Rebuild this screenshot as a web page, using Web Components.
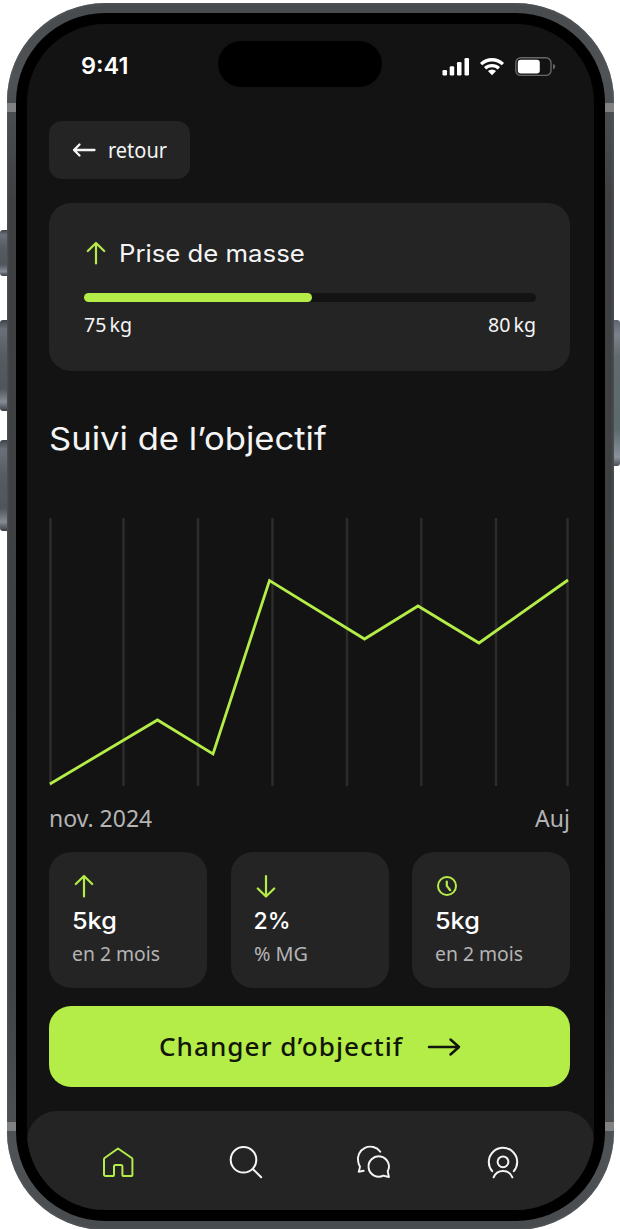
<!DOCTYPE html>
<html lang="fr">
<head>
<meta charset="utf-8">
<title>Suivi de l’objectif</title>
<style>
  html, body {
    margin: 0;
    height: 100%;
    overflow: hidden;
    background: #fff;
  }
  body {
    --color-bg: #131313;
    --color-surface: #242424;
    --color-text: #f5f5f5;
    --color-muted: #b4b4b4;
    --color-accent: #b4ed47;
    --font: "Noto Sans", "Open Sans", sans-serif;
    --font-title: Inter, "Liberation Sans", sans-serif;
    color: var(--color-text);
    font-family: var(--font);
  }
</style>
</head>
<body>
<phone-frame>
  <status-bar slot="status" time="9:41"></status-bar>
  <goal-page></goal-page>
  <tab-bar slot="nav"></tab-bar>
</phone-frame>

<script>
const ICONS = {
  back: [24, 16, '<path d="M22.500 8H2M7.500 2.500 2 8l5.500 5.500" stroke-width="2.300"/>'],
  up: [24, 24, '<path d="M12 22.500V2M3.800 10 12 2l8.200 8" stroke-width="2.200"/>'],
  down: [24, 24, '<path d="M12 2v20.500M3.800 14.500l8.200 8 8.200-8" stroke-width="2.200"/>'],
  clock: [24, 24, '<circle cx="12" cy="12" r="9" stroke-width="2"/><path d="M11.800 7.500v4.400l3.400 4.300" stroke-width="2.200"/>'],
  next: [34, 20, '<path d="M2 10h29.500M23.500 2.500l8.500 7.500-8.500 7.500" stroke-width="2.500"/>'],
  home: [36, 36, '<path d="M18 4.500 31.800 14q.6.500.6 1.300V30.400q0 1.600-1.600 1.600H24q-1.600 0-1.600-1.600v-7.800q0-1.600-1.600-1.600h-5.200q-1.600 0-1.600 1.600v7.800q0 1.600-1.600 1.600H5.600Q4 32 4 30.400V15.300q0-.8.6-1.300Z" stroke-width="2"/>'],
  search: [36, 36, '<circle cx="15.500" cy="15.800" r="12.800" stroke-width="2"/><path d="m25 25.200 8.200 8" stroke-width="2"/>'],
  chat: [36, 36, '<path d="M24.300 7.700A12.400 12.400 0 0 0 2.300 18.200q.4 2.500 1.700 4.300-.3 2.400-1.300 5.200l5-.9" stroke-width="1.900"/><path d="M31.700 27.300A10.200 10.200 0 1 0 27.300 31.600l5.600 1.400Z" stroke-width="1.900"/>'],
  profile: [36, 36, '<path d="M7.200 27.200a14.200 14.200 0 1 1 21.600 0" stroke-width="2"/><circle cx="18" cy="17.800" r="5.400" stroke-width="2"/><path d="M8.600 33.300a10.100 10.100 0 0 1 18.800 0" stroke-width="2"/>'],
  signal: [28, 20, '<g fill="currentColor" stroke="none"><rect x=".5" y="13" width="4.500" height="5.500" rx="1.200"/><rect x="7.700" y="9.300" width="4.500" height="9.200" rx="1.200"/><rect x="15" y="5" width="4.500" height="13.500" rx="1.200"/><rect x="22.500" y="1" width="4.500" height="17.500" rx="1.200"/></g>'],
  wifi: [26, 20, '<path d="M2.100 7.100a15.800 15.800 0 0 1 21.800 0M6.100 11.300a10 10 0 0 1 13.800 0" stroke-width="3.300" stroke-linecap="butt"/><path d="M13 18.200 8.900 14.100a6 6 0 0 1 8.200 0Z" fill="currentColor" stroke="none"/>'],
  battery: [41, 20, '<rect x=".8" y=".8" width="35.200" height="17.600" rx="5" stroke="#676767" stroke-width="1.400"/><rect x="2.800" y="2.800" width="22" height="13.600" rx="3" fill="currentColor" stroke="none"/><path d="M38 6.700q2.300.9 2.300 2.900T38 12.500Z" fill="#676767" stroke="none"/>'],
};

class AppIcon extends HTMLElement {
  constructor() {
    super();
    this.attachShadow({ mode: 'open' });
  }

  connectedCallback() {
    const [w, h, body] = ICONS[this.getAttribute('name')];
    this.shadowRoot.innerHTML = `
      <style>
        :host { display: block; flex: none; width: ${w}px; height: ${h}px; }
        svg { display: block; }
      </style>
      <svg width="${w}" height="${h}" viewBox="0 0 ${w} ${h}" fill="none" stroke="currentColor"
        stroke-linecap="round" stroke-linejoin="round" aria-hidden="true">${body}</svg>
    `;
  }
}

/* One line of text stretched or narrowed to a given width. */
class FitText extends HTMLElement {
  constructor() {
    super();
    this.attachShadow({ mode: 'open' });
  }

  connectedCallback() {
    const width = Number(this.getAttribute('width'));
    this.shadowRoot.innerHTML = `
      <style>
        :host { display: block; flex: none; width: ${width}px; }
        span { display: inline-block; white-space: nowrap; transform-origin: 0 50%; vertical-align: top; }
      </style>
      <span><slot></slot></span>
    `;
    const span = this.shadowRoot.querySelector('span');
    span.style.transform = `scaleX(${width / span.offsetWidth})`;
  }
}

class PhoneFrame extends HTMLElement {
  constructor() {
    super();
    this.attachShadow({ mode: 'open' });
    this.shadowRoot.innerHTML = `
      <style>
        :host { display: block; position: relative; height: 1229px; overflow: hidden; }
        .frame {
          position: relative;
          box-sizing: border-box;
          width: 607px;
          height: 1227px;
          margin: 3px auto 0;
          padding: 9.5px 9px 9px;
          border-radius: 98px;
          background: linear-gradient(#484b4e, #505356 6%, #3d3f41 16%, #3f4244 80%, #505356 94%, #484b4e);
          box-shadow: inset 0 0 3px 1px #54575a;
        }
        .band {
          position: absolute;
          left: 0;
          right: 0;
          height: 9px;
          background: #808183;
        }
        .band.top { top: 100px; }
        .band.bottom { top: 1119px; }
        .bezel {
          position: relative;
          box-sizing: border-box;
          height: 100%;
          padding: 11px;
          border-radius: 89px;
          background: #000;
        }
        .screen {
          display: flex;
          flex-direction: column;
          height: 1186px;
          border-radius: 78px;
          overflow: hidden;
          background: var(--color-bg);
        }
        .content { flex: 1; min-height: 0; }
        .key {
          position: absolute;
          left: 0;
          width: 8px;
          border-radius: 3px 0 0 3px;
          background: linear-gradient(#3f4348, #6a7079 10%, #565b61 40%, #50555b 75%, #858b95 90%, #3b3e43);
        }
        .key.right {
          left: auto;
          right: 0;
          border-radius: 0 3px 3px 0;
          background: linear-gradient(#5f666e, #7b828b 10%, #626b6f 25%, #5c696d 75%, #8a929c 94%, #4a4f55);
        }
      </style>
      <div class="key" style="top: 230px; height: 46px"></div>
      <div class="key" style="top: 320px; height: 91px"></div>
      <div class="key" style="top: 440px; height: 91px"></div>
      <div class="key right" style="top: 320px; height: 146px"></div>
      <div class="frame">
        <div class="band top"></div>
        <div class="band bottom"></div>
        <div class="bezel">
          <div class="screen">
            <slot name="status"></slot>
            <div class="content"><slot></slot></div>
            <slot name="nav"></slot>
          </div>
        </div>
      </div>
    `;
  }
}

class StatusBar extends HTMLElement {
  constructor() {
    super();
    this.attachShadow({ mode: 'open' });
  }

  connectedCallback() {
    this.shadowRoot.innerHTML = `
      <style>
        :host {
          display: flex;
          align-items: flex-start;
          box-sizing: border-box;
          height: 97.500px;
          padding: 17px 38px 0 54px;
          color: #fff;
        }
        .time { margin-top: 11.500px; font: 600 22.500px/28px var(--font-title); }
        .island {
          width: 164px;
          height: 46.500px;
          margin-left: 90.500px;
          border-radius: 24px;
          background: #000;
        }
        .icons { display: flex; gap: 10.500px; margin: 16.500px 0 0 auto; }
      </style>
      <fit-text class="time" width="47">${this.getAttribute('time')}</fit-text>
      <div class="island"></div>
      <div class="icons">
        <app-icon name="signal"></app-icon>
        <app-icon name="wifi" style="margin-left: -1px"></app-icon>
        <app-icon name="battery" style="margin-left: -1px"></app-icon>
      </div>
    `;
  }
}

class GoalProgress extends HTMLElement {
  constructor() {
    super();
    this.attachShadow({ mode: 'open' });
  }

  connectedCallback() {
    this.shadowRoot.innerHTML = `
      <style>
        :host {
          display: block;
          box-sizing: border-box;
          height: 168px;
          padding: 37px 34.500px 0 35px;
          border-radius: 22px;
          background: var(--color-surface);
        }
        .title {
          display: flex;
          align-items: center;
          gap: 11.500px;
          height: 26px;
          font: 400 24px/26px var(--font-title);
        }
        .title fit-text { margin-top: 2px; }
        app-icon { color: var(--color-accent); margin-left: -0.500px; }
        .track { height: 9px; margin-top: 26.500px; border-radius: 5px; background: var(--color-bg); }
        .fill { width: ${this.getAttribute('percent')}%; height: 100%; border-radius: 5px; background: var(--color-accent); }
        .range {
          display: flex;
          justify-content: space-between;
          margin-top: 11px;
          font-size: 20px;
          line-height: 24px;
          word-spacing: -2px;
        }
      </style>
      <div class="title"><app-icon name="up"></app-icon><fit-text width="185.500"><slot></slot></fit-text></div>
      <div class="track"><div class="fill"></div></div>
      <div class="range">
        <fit-text width="48">${this.getAttribute('from')}</fit-text>
        <fit-text width="48">${this.getAttribute('to')}</fit-text>
      </div>
    `;
  }
}

class GoalChart extends HTMLElement {
  constructor() {
    super();
    this.attachShadow({ mode: 'open' });
    const lines = [1.5, 74.500, 149, 223.500, 298, 372.300, 447, 518.500]
      .map((x) => `<path d="M${x} 0V268"/>`)
      .join('');
    this.shadowRoot.innerHTML = `
      <style>
        :host { display: block; }
        svg { display: block; }
        .axis {
          display: flex;
          justify-content: space-between;
          margin-top: 17.800px;
          color: var(--color-muted);
          font-size: 23px;
          line-height: 28px;
        }
      </style>
      <svg width="521" height="268" viewBox="0 0 521 268" fill="none">
        <g stroke="#2c2c2c" stroke-width="2.500">${lines}</g>
        <path d="M.9 266 108.500 202l55.500 34L220.500 62.500 315.500 121l53.500-33 61 37L519 62" stroke="#b4ed47" stroke-width="2.800"/>
      </svg>
      <div class="axis">
        <fit-text width="103">nov. 2024</fit-text>
        <fit-text width="35">Auj</fit-text>
      </div>
    `;
  }
}

class StatCard extends HTMLElement {
  constructor() {
    super();
    this.attachShadow({ mode: 'open' });
  }

  connectedCallback() {
    const [valueWidth, labelWidth] = this.getAttribute('widths').split(' ');
    this.shadowRoot.innerHTML = `
      <style>
        :host {
          display: block;
          box-sizing: border-box;
          height: 136px;
          padding: 22.500px 0 0 23px;
          border-radius: 22px;
          background: var(--color-surface);
        }
        app-icon { color: var(--color-accent); }
        .value { margin-top: 9px; color: #fff; font: 500 23px/28px var(--font-title); }
        .label { margin-top: 6.400px; color: var(--color-muted); font-size: 20px; line-height: 24px; }
      </style>
      <app-icon name="${this.getAttribute('icon')}"></app-icon>
      <fit-text class="value" width="${valueWidth}">${this.getAttribute('value')}</fit-text>
      <fit-text class="label" width="${labelWidth}">${this.getAttribute('label')}</fit-text>
    `;
  }
}

class GoalPage extends HTMLElement {
  constructor() {
    super();
    this.attachShadow({ mode: 'open' });
    this.shadowRoot.innerHTML = `
      <style>
        :host { display: block; padding: 0 23.500px 0 22.500px; }
        button { border: none; margin: 0; font-family: inherit; color: inherit; cursor: pointer; }
        .back {
          display: flex;
          align-items: center;
          gap: 12px;
          box-sizing: border-box;
          width: 141px;
          height: 58px;
          padding: 0 0 0 22.500px;
          border-radius: 13px;
          background: var(--color-surface);
          font-size: 21px;
          line-height: 28px;
        }
        goal-progress { margin-top: 24px; }
        h1 { margin: 47.700px 0 59.300px; font: 400 31.500px/40px var(--font-title); }
        .stats {
          display: grid;
          grid-template-columns: repeat(3, 1fr);
          gap: 23.500px;
          margin-top: 20.200px;
        }
        .cta {
          display: flex;
          align-items: center;
          box-sizing: border-box;
          width: 100%;
          height: 81.500px;
          margin-top: 18px;
          padding: 0 0 0 109.500px;
          gap: 24px;
          border-radius: 22px;
          background: var(--color-accent);
          color: #111608;
          font-size: 26px;
          font-weight: 500;
          letter-spacing: 1px;
          line-height: 36px;
        }
        .cta fit-text { margin-top: -1px; }
      </style>
      <button class="back"><app-icon name="back"></app-icon><fit-text width="59">retour</fit-text></button>
      <goal-progress from="75 kg" to="80 kg" percent="50.600">Prise de masse</goal-progress>
      <h1><fit-text width="278">Suivi de l’objectif</fit-text></h1>
      <goal-chart></goal-chart>
      <div class="stats">
        <stat-card icon="up" value="5kg" label="en 2 mois" widths="45 88"></stat-card>
        <stat-card icon="down" value="2%" label="% MG" widths="37 54.500"></stat-card>
        <stat-card icon="clock" value="5kg" label="en 2 mois" widths="45 88"></stat-card>
      </div>
      <button class="cta"><fit-text width="244">Changer d’objectif</fit-text><app-icon name="next"></app-icon></button>
    `;
  }
}

class TabBar extends HTMLElement {
  constructor() {
    super();
    this.attachShadow({ mode: 'open' });
    this.shadowRoot.innerHTML = `
      <style>
        :host {
          display: grid;
          grid-template-columns: repeat(4, 1fr);
          justify-items: center;
          flex: none;
          box-sizing: border-box;
          height: 98.500px;
          padding: 32.500px 26.500px 0 27px;
          border-radius: 30px 30px 0 0;
          background: var(--color-surface);
        }
        .active { color: var(--color-accent); }
      </style>
      <app-icon class="active" name="home"></app-icon>
      <app-icon name="search"></app-icon>
      <app-icon name="chat"></app-icon>
      <app-icon name="profile"></app-icon>
    `;
  }
}

customElements.define('app-icon', AppIcon);
customElements.define('fit-text', FitText);
customElements.define('goal-progress', GoalProgress);
customElements.define('goal-chart', GoalChart);
customElements.define('stat-card', StatCard);
customElements.define('status-bar', StatusBar);
customElements.define('goal-page', GoalPage);
customElements.define('tab-bar', TabBar);
customElements.define('phone-frame', PhoneFrame);
</script>
</body>
</html>
